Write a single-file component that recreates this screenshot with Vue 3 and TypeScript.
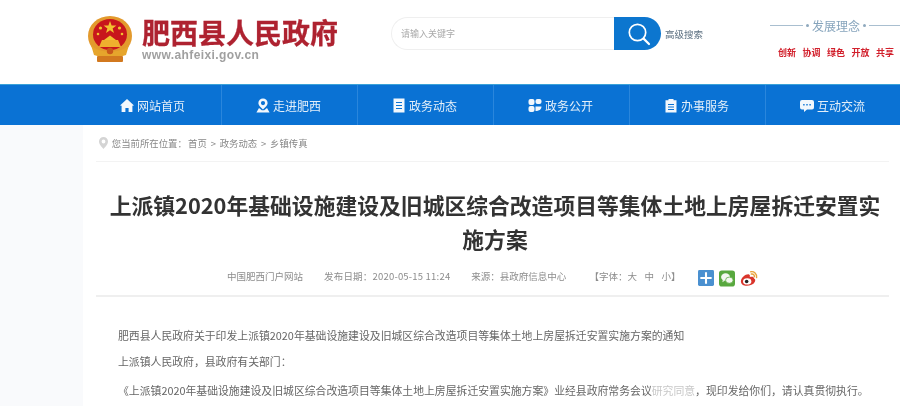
<script setup lang="ts">
const navItems = [
  { label: '网站首页', icon: 'home' },
  { label: '走进肥西', icon: 'pin' },
  { label: '政务动态', icon: 'doc' },
  { label: '政务公开', icon: 'grid' },
  { label: '办事服务', icon: 'clip' },
  { label: '互动交流', icon: 'chat' },
]

const ideas = ['创新', '协调', '绿色', '开放', '共享']
</script>

<template>
  <div class="page">
    <header class="top">
      <div class="logo">
        <svg class="emblem" width="44" height="46" viewBox="0 0 44 46">
          <ellipse cx="22" cy="20" rx="22" ry="20" fill="#e39a2d" />
          <ellipse cx="22" cy="18.5" rx="17" ry="15.5" fill="#c8161c" />
          <polygon points="22,5 23.6,9.6 28.4,9.6 24.6,12.4 26,17 22,14.2 18,17 19.4,12.4 15.6,9.6 20.4,9.6" fill="#f2c230" />
          <circle cx="12.5" cy="12" r="1.6" fill="#f2c230" />
          <circle cx="31.5" cy="12" r="1.6" fill="#f2c230" />
          <circle cx="10" cy="18" r="1.3" fill="#f2c230" />
          <circle cx="34" cy="18" r="1.3" fill="#f2c230" />
          <path d="M16 24 L22 19.5 L28 24 Z" fill="#f2c230" />
          <path d="M11 31 L14 24 H30 L33 31 Z" fill="#eeb02e" />
          <path d="M3 29 C10 38 34 38 41 29 L38 39 C30 42 14 42 6 39 Z" fill="#e6a52c" />
          <circle cx="22" cy="35" r="3.2" fill="#c9571b" />
          <rect x="9" y="40" width="26" height="6" rx="1" fill="#d2791f" />
        </svg>
        <div class="logo-text">
          <div class="logo-name">肥西县人民政府</div>
          <div class="logo-url">www.ahfeixi.gov.cn</div>
        </div>
      </div>

      <div class="search">
        <div class="search-input">请输入关键字</div>
        <button class="search-btn" type="button">
          <svg width="24" height="24" viewBox="0 0 24 24" fill="none" stroke="#fff" stroke-linecap="round">
            <circle cx="10.5" cy="10.5" r="8.2" stroke-width="1.7" />
            <path d="M16.6 16.6 L22 22" stroke-width="2.2" />
          </svg>
        </button>
        <span class="search-adv">高级搜索</span>
      </div>

      <div class="idea">
        <div class="idea-title">
          <span class="idea-line short"></span><i class="dot"></i>
          <span>发展理念</span>
          <i class="dot"></i><span class="idea-line"></span>
        </div>
        <div class="idea-words">
          <span v-for="w in ideas" :key="w">{{ w }}</span>
        </div>
      </div>
    </header>

    <nav class="nav">
      <a v-for="item in navItems" :key="item.label" class="nav-item">
        <svg class="nav-icon" width="14" height="15" viewBox="0 0 14 15" fill="#f2f7fc">
          <path v-if="item.icon === 'home'" d="M7 1 L14 7.4 L12.4 7.8 V14 H8.6 V10 H5.4 V14 H1.6 V7.8 L0 7.4 Z" />
          <template v-else-if="item.icon === 'pin'">
            <path fill-rule="evenodd" d="M7 0.5 A4.6 4.6 0 0 1 11.6 5.1 C11.6 7.6 8.8 10 7 11.4 C5.2 10 2.4 7.6 2.4 5.1 A4.6 4.6 0 0 1 7 0.5 Z M7 3 A2.1 2.1 0 1 0 7 7.2 A2.1 2.1 0 1 0 7 3 Z" />
            <path d="M3 10 L5.8 12.3 H8.2 L11 10 L13.6 14.5 H0.4 Z" />
          </template>
          <path v-else-if="item.icon === 'doc'" fill-rule="evenodd" d="M1.5 0.5 H12.5 V14.5 H1.5 Z M4 4 V5 H10 V4 Z M4 7 V8 H10 V7 Z M4 10 V11 H10 V10 Z" />
          <template v-else-if="item.icon === 'grid'">
            <rect x="0.5" y="1" width="6" height="6" rx="2" />
            <rect x="7.5" y="1" width="6" height="5" rx="2" />
            <rect x="0.5" y="8" width="6" height="6" rx="2" />
            <path d="M7.5 8.5 H13.5 C13.5 11.5 11 13 7.5 13 Z" />
          </template>
          <path v-else-if="item.icon === 'clip'" fill-rule="evenodd" d="M4.5 1 H9.5 V2.2 H12.5 V14.5 H1.5 V2.2 H4.5 Z M4 6 V7 H10 V6 Z M4 8.5 V9.5 H10 V8.5 Z M4 11 V12 H10 V11 Z" />
          <path v-else fill-rule="evenodd" d="M2 2 H12 A2 2 0 0 1 14 4 V9.5 A2 2 0 0 1 12 11.5 H7 L4 14 V11.5 H2 A2 2 0 0 1 0 9.5 V4 A2 2 0 0 1 2 2 Z M3.2 6 V7.4 H4.6 V6 Z M6.3 6 V7.4 H7.7 V6 Z M9.4 6 V7.4 H10.8 V6 Z" />
        </svg>
        <span>{{ item.label }}</span>
      </a>
    </nav>

    <div class="wrap">
      <main class="content">
        <div class="crumb">
          <svg width="9" height="12" viewBox="0 0 9 12" fill="#d4d4d4">
            <path fill-rule="evenodd" d="M4.5 0 A4.5 4.5 0 0 1 9 4.5 C9 7.4 5.8 10.4 4.5 12 C3.2 10.4 0 7.4 0 4.5 A4.5 4.5 0 0 1 4.5 0 Z M4.5 2.6 A1.9 1.9 0 1 0 4.5 6.4 A1.9 1.9 0 1 0 4.5 2.6 Z" />
          </svg>
          <span class="crumb-here">您当前所在位置&#xFF1A;</span>
          <span>首页</span>
          <span>&gt;</span>
          <span>政务动态</span>
          <span>&gt;</span>
          <span>乡镇传真</span>
        </div>

        <h1 class="title">上派镇2020年基础设施建设及旧城区综合改造项目等集体土地上房屋拆迁安置实施方案</h1>

        <div class="meta">
          <span>中国肥西门户网站</span>
          <span class="date">发布日期&#xFF1A;2020-05-15 11:24</span>
          <span>来源&#xFF1A;县政府信息中心</span>
          <span class="fonts">【字体&#xFF1A;大 中 小】</span>
          <div class="share">
            <svg width="16" height="16" viewBox="0 0 17 17">
              <rect width="17" height="17" rx="1.5" fill="#4a90d0" />
              <path d="M8.5 2.5 V14.5 M2.5 8.5 H14.5" stroke="#fff" stroke-width="2.2" />
            </svg>
            <svg width="16" height="17" viewBox="0 0 17 17">
              <rect width="17" height="17" rx="3" fill="#58a83e" />
              <ellipse cx="7" cy="7" rx="4.8" ry="4" fill="#f4f8f0" />
              <path d="M4 10 L3.6 12.6 L6.4 10.6 Z" fill="#f4f8f0" />
              <ellipse cx="11" cy="10.3" rx="4" ry="3.3" fill="#f4f8f0" stroke="#58a83e" stroke-width="0.8" />
            </svg>
            <svg width="18" height="19" viewBox="0 0 20 20" fill="none">
              <path d="M1 13 C1 9 7 4.5 10 5.5 C11.5 6 11 7.6 10.8 8.4 C13 7.6 15.6 7.8 15.6 10 C17 10.5 17.4 12 16.4 13.8 C15 16.6 11 18 7.4 18 C4 18 1 16.4 1 13 Z" fill="#d9352b" />
              <ellipse cx="8" cy="13.2" rx="4.6" ry="3.5" fill="#fff" />
              <circle cx="7.4" cy="13.4" r="2" fill="#222" />
              <path d="M12 2.5 C15.5 1.8 19 4.5 18.4 9 M12.6 5 C14.6 4.6 16.2 6 15.9 8" stroke="#e8a23a" stroke-width="1.6" stroke-linecap="round" />
            </svg>
          </div>
        </div>

        <div class="body">
          <p>肥西县人民政府关于印发上派镇2020年基础设施建设及旧城区综合改造项目等集体土地上房屋拆迁安置实施方案的通知</p>
          <p>上派镇人民政府&#xFF0C;县政府有关部门&#xFF1A;</p>
          <p class="last">《上派镇2020年基础设施建设及旧城区综合改造项目等集体土地上房屋拆迁安置实施方案》业经县政府常务会议<span class="faded">研究同意</span>&#xFF0C;现印发给你们&#xFF0C;请认真贯彻执行。</p>
        </div>
      </main>
    </div>
  </div>
</template>

<style>
html,
body {
  margin: 0;
  background: #fff;
  overflow: hidden;
}
</style>

<style scoped>
.page {
  width: 900px;
  height: 406px;
  overflow: hidden;
  font-family: "Noto Sans CJK SC", "Liberation Sans", sans-serif;
  color: #666;
  filter: blur(0.4px);
}

.top {
  height: 84px;
  box-sizing: border-box;
  display: flex;
  padding: 16px 0 0 88px;
  background: #fff;
}

.logo {
  display: flex;
  gap: 10px;
  width: 303px;
}

.emblem {
  flex: none;
}

.logo-name {
  font-size: 28px;
  line-height: 32px;
  font-weight: 700;
  color: #ae2230;
  white-space: nowrap;
  -webkit-text-stroke: 0.3px #ae2230;
}

.logo-url {
  font-family: "Liberation Sans", sans-serif;
  font-size: 12px;
  font-weight: 700;
  line-height: 14px;
  letter-spacing: 0.4px;
  color: #a0a0a0;
}

.search {
  display: flex;
  align-items: center;
  width: 379px;
  height: 33px;
  margin-top: 1px;
}

.search-input {
  width: 223px;
  height: 33px;
  box-sizing: border-box;
  padding-left: 9px;
  border: 1px solid #efefef;
  border-right: 0;
  border-radius: 17px 0 0 17px;
  font-size: 9px;
  line-height: 31px;
  color: #aaa;
}

.search-btn {
  width: 47px;
  height: 33px;
  padding: 0 0 0 2px;
  border: 0;
  border-radius: 0 17px 17px 0;
  background: #0c76cf;
  display: flex;
  align-items: center;
  justify-content: center;
}

.search-adv {
  margin-left: 4px;
  font-size: 9.5px;
  color: #5b6f80;
  white-space: nowrap;
}

.idea {
  flex: 1;
  min-width: 0;
}

.idea-title {
  display: flex;
  align-items: center;
  gap: 3px;
  height: 18px;
  font-size: 12px;
  color: #86a4bc;
  white-space: nowrap;
}

.idea-line {
  flex: 1;
  height: 1px;
  background: #a9bfd0;
}

.idea-line.short {
  flex: none;
  width: 33px;
}

.dot {
  width: 3px;
  height: 3px;
  border-radius: 50%;
  background: #8fa9be;
}

.idea-words {
  display: flex;
  gap: 6.5px;
  margin-top: 13px;
  margin-left: 8px;
  font-size: 9px;
  line-height: 12px;
  font-weight: 700;
  color: #d2202c;
  white-space: nowrap;
}

.nav {
  height: 41px;
  display: flex;
  padding-left: 86px;
  background: #0a72d4;
  border-top: 1px solid #3aa2d8;
  box-sizing: border-box;
}

.nav-item {
  flex: none;
  width: 136px;
  display: flex;
  align-items: center;
  justify-content: center;
  gap: 3px;
  box-sizing: border-box;
  padding-right: 2px;
  font-size: 12px;
  color: #e4eff9;
  border-right: 1px solid #2a86dc;
}

.wrap {
  height: 281px;
  padding-left: 83px;
  background: #f9fafc;
}

.content {
  height: 281px;
  padding-left: 13px;
  padding-right: 11px;
  background: #fff;
}

.crumb {
  height: 37px;
  box-sizing: border-box;
  display: flex;
  align-items: center;
  gap: 3.8px;
  padding-left: 3px;
  font-size: 9.4px;
  color: #888;
  border-bottom: 1px solid #f3f3f3;
}

.crumb-here {
  margin-right: -2.5px;
}

.title {
  margin: 26px 0 0;
  padding-left: 5px;
  text-align: center;
  font-size: 21.8px;
  line-height: 34px;
  font-weight: 700;
  color: #333;
}

.meta {
  display: flex;
  align-items: center;
  height: 36px;
  padding: 2px 0 1px 131px;
  font-size: 9.5px;
  color: #8c8c8c;
  white-space: nowrap;
  border-bottom: 2px solid #efefef;
}

.meta > span {
  margin-right: 21px;
}

.meta > .date {
  letter-spacing: 0.2px;
}

.meta > .fonts {
  margin-left: 2px;
  margin-right: 18px;
  word-spacing: 5.4px;
}

.share {
  display: flex;
  align-items: center;
  gap: 5px;
  margin-top: 4px;
}

.body {
  padding: 30px 0 0 22px;
  font-size: 10.85px;
  line-height: 16px;
  color: #666;
}

.body p {
  margin: 0 0 10px;
  white-space: nowrap;
}

.body .last {
  margin-top: 13px;
}

.faded {
  color: #c8c8c8;
}
</style>
